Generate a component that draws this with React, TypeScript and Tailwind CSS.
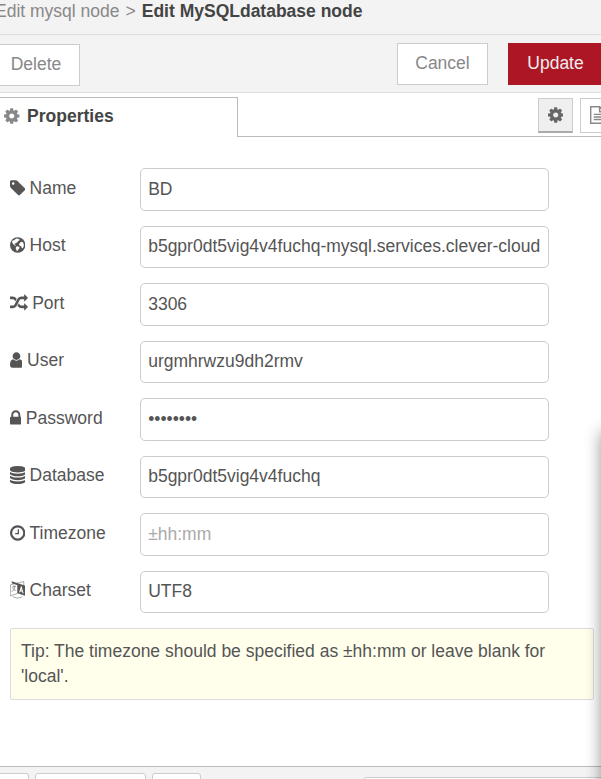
import React from "react";

type Glyph = { box: string; width: string; body: React.ReactNode };

const glyphs: Record<string, Glyph> = {
  tag: {
    box: "128 0 1536 1792",
    width: "w-[15.4px]",
    body: (
      <path d="M576 448q0-53-37.5-90.5t-90.5-37.5-90.5 37.5-37.5 90.5 37.5 90.5 90.5 37.5 90.5-37.5 37.5-90.5zm1067 576q0 53-37 90l-491 492q-39 37-91 37-53 0-90-37l-715-716q-38-37-64.5-101t-26.5-117v-416q0-52 38-90t90-38h416q53 0 117 26.5t102 64.5l715 714q37 39 37 91z" />
    ),
  },
  globe: {
    box: "128 0 1536 1792",
    width: "w-[15.4px]",
    body: (
      <>
        <circle cx="896" cy="896" r="768" />
        <path
          fill="#fff"
          d="M640 330L800 250L980 260L1000 330L1100 340L1090 430L980 470L900 560L820 640L730 690L640 760L560 740L590 850L700 900L690 970L560 910L440 800L350 640L330 520L450 420L560 420ZM1180 620L1330 560L1450 660L1510 860L1490 1060L1390 1230L1300 1200L1270 1060L1190 990L1090 960L1040 860L1080 720ZM740 1060L900 1020L1060 1100L1090 1200L1010 1290L930 1360L880 1490L800 1500L760 1350L690 1210Z"
        />
      </>
    ),
  },
  random: {
    box: "0 0 1792 1792",
    width: "w-[18px]",
    body: (
      <path d="M666 481q-60 92-137 273-22-45-37-72.5t-40.5-63.5-51-56.5-63-35-81.5-14.5h-224q-14 0-23-9t-9-23v-192q0-14 9-23t23-9h224q250 0 410 225zm1126 799q0 14-9 23l-320 320q-9 9-23 9-13 0-22.5-9.5t-9.5-22.5v-192q-32 0-85 .5t-81 1-73-1-71-5-64-10.5-63-18.5-58-28.5-59-40-55-53.5-56-69.5q59-93 136-273 22 45 37 72.5t40.5 63.5 51 56.5 63 35 81.5 14.5h256v-192q0-14 9-23t23-9q12 0 24 10l319 319q9 9 9 23zm0-896q0 14-9 23l-320 320q-9 9-23 9-13 0-22.5-9.5t-9.5-22.5v-192h-256q-48 0-87 15t-69 45-51 61.5-45 77.5q-32 62-78 171-29 66-49.5 111t-54 105-64 100-74 83-90 68.5-106.5 42-128 16.5h-224q-14 0-23-9t-9-23v-192q0-14 9-23t23-9h224q48 0 87-15t69-45 51-61.5 45-77.5q32-62 78-171 29-66 49.5-111t54-105 64-100 74-83 90-68.5 106.5-42 128-16.5h256v-192q0-14 9-23t23-9q12 0 24 10l319 319q9 9 9 23z" />
    ),
  },
  user: {
    box: "256 0 1280 1792",
    width: "w-[12.9px]",
    body: (
      <path d="M1536 1399q0 109-62.5 187t-150.5 78h-854q-88 0-150.5-78t-62.5-187q0-85 8.5-160.5t31.5-152 58.5-131 94-89 134.5-34.5q131 128 313 128t313-128q76 0 134.5 34.5t94 89 58.5 131 31.5 152 8.5 160.5zm-256-887q0 159-112.5 271.5t-271.5 112.5-271.5-112.5-112.5-271.5 112.5-271.5 271.5-112.5 271.5 112.5 112.5 271.5z" />
    ),
  },
  lock: {
    box: "320 0 1152 1792",
    width: "w-[11.6px]",
    body: (
      <path d="M640 768h512v-192q0-106-75-181t-181-75-181 75-75 181v192zm832 96v576q0 40-28 68t-68 28h-960q-40 0-68-28t-28-68v-576q0-40 28-68t68-28h32v-192q0-184 132-316t316-132 316 132 132 316v192h32q40 0 68 28t28 68z" />
    ),
  },
  database: {
    box: "128 0 1536 1792",
    width: "w-[15.4px]",
    body: (
      <path d="M896 768q237 0 443-43t325-127v170q0 69-103 128t-280 93.5-385 34.5-385-34.5-280-93.5-103-128v-170q119 84 325 127t443 43zm0 768q237 0 443-43t325-127v170q0 69-103 128t-280 93.5-385 34.5-385-34.5-280-93.5-103-128v-170q119 84 325 127t443 43zm0-384q237 0 443-43t325-127v170q0 69-103 128t-280 93.5-385 34.5-385-34.5-280-93.5-103-128v-170q119 84 325 127t443 43zm0-1152q208 0 385 34.5t280 93.5 103 128v128q0 69-103 128t-280 93.5-385 34.5-385-34.5-280-93.5-103-128v-128q0-69 103-128t280-93.5 385-34.5z" />
    ),
  },
  clock: {
    box: "128 0 1536 1792",
    width: "w-[15.4px]",
    body: (
      <path d="M1024 544v448q0 14-9 23t-23 9h-320q-14 0-23-9t-9-23v-64q0-14 9-23t23-9h224v-352q0-14 9-23t23-9h64q14 0 23 9t9 23zm416 352q0-148-73-273t-198-198-273-73-273 73-198 198-73 273 73 273 198 198 273 73 273-73 198-198 73-273zm224 0q0 209-103 385.5t-279.5 279.5-385.5 103-385.5-103-279.5-279.5-103-385.5 103-385.5 279.5-279.5 385.5-103 385.5 103 279.5 279.5 103 385.5z" />
    ),
  },
  language: {
    box: "128 0 1536 1792",
    width: "w-[15.4px]",
    body: (
      <>
        <path d="M300 30L880 230V420L300 220ZM880 230L1664 470V1480L880 1230Z" />
        <path
          fill="none"
          stroke="currentColor"
          strokeWidth="50"
          d="M160 390L880 180V1240L160 1480ZM900 220L1500 50V400M400 1560Q800 1830 1280 1620L1350 1540"
        />
        <path
          fill="none"
          stroke="currentColor"
          strokeWidth="60"
          d="M300 630L720 510M510 420V560M630 560Q560 900 300 1080M400 720Q540 900 720 960"
        />
        <path
          fill="none"
          stroke="#fff"
          strokeWidth="100"
          d="M1080 1130L1250 620L1440 1240M1130 960L1390 1030"
        />
      </>
    ),
  },
  cog: {
    box: "128 0 1536 1792",
    width: "w-[15.4px]",
    body: (
      <path d="M1152 896q0-106-75-181t-181-75-181 75-75 181 75 181 181 75 181-75 75-181zm512-109v222q0 12-8 23t-20 13l-185 28q-19 54-39 91 35 50 107 138 10 12 10 25t-9 23q-27 37-99 108t-94 71q-12 0-26-9l-138-108q-44 23-91 38-16 136-29 186-7 28-36 28h-222q-14 0-24.5-8.5t-11.5-21.5l-28-184q-49-16-90-37l-141 107q-10 9-25 9-14 0-25-11-126-114-165-168-7-10-7-23 0-12 8-23 15-21 51-66.5t54-70.5q-27-50-41-99l-183-27q-13-2-21-12.5t-8-23.5v-222q0-12 8-23t19-13l186-28q14-46 39-92-40-57-107-138-10-12-10-24 0-10 9-23 26-36 98.5-107.5t94.5-71.5q13 0 26 10l138 107q44-23 91-38 16-136 29-186 7-28 36-28h222q14 0 24.5 8.5t11.5 21.5l28 184q49 16 90 37l142-107q9-9 24-9 13 0 25 10 129 119 165 170 7 8 7 22 0 12-8 23-15 21-51 66.5t-54 70.5q26 50 41 98l183 28q13 2 21 12.5t8 23.5z" />
    ),
  },
  file: {
    box: "128 0 1536 1792",
    width: "w-[15.4px]",
    body: (
      <path
        fill="none"
        stroke="currentColor"
        strokeWidth="140"
        d="M198 70H1088L1594 576V1722H198ZM1088 70V576H1594M500 832H1312M500 1088H1312M500 1344H1312"
      />
    ),
  },
};

function Icon({ name }: { name: string }) {
  const g = glyphs[name];
  return (
    <svg viewBox={g.box} fill="currentColor" className={`h-[18px] shrink-0 ${g.width}`}>
      {g.body}
    </svg>
  );
}

const fields = [
  { icon: "tag", label: "Name", value: "BD" },
  { icon: "globe", label: "Host", value: "b5gpr0dt5vig4v4fuchq-mysql.services.clever-cloud" },
  { icon: "random", label: "Port", value: "3306" },
  { icon: "user", label: "User", value: "urgmhrwzu9dh2rmv" },
  { icon: "lock", label: "Password", value: "password", type: "password" },
  { icon: "database", label: "Database", value: "b5gpr0dt5vig4v4fuchq" },
  { icon: "clock", label: "Timezone", value: "", placeholder: "±hh:mm" },
  { icon: "language", label: "Charset", value: "UTF8" },
];

export default function App() {
  return (
    <div className="relative flex h-[779px] w-[601px] flex-col overflow-hidden bg-white font-['Liberation_Sans',Arial,sans-serif] text-[17.5px] leading-[25px] text-[#555]">
      <header className="flex h-[35px] shrink-0 items-start gap-[6px] border-b border-[#ddd] bg-[#f3f3f3] whitespace-nowrap text-[#888]">
        <span className="-mt-px -ml-[5px]">Edit mysql node</span>
        <span className="-mt-px">&gt;</span>
        <span className="-mt-px font-bold text-[#444]">Edit MySQLdatabase node</span>
      </header>

      <div className="flex h-[58px] shrink-0 items-start border-b border-[#ddd] bg-[#f3f3f3] text-[#888]">
        <button className="mt-[9px] -ml-px h-[42px] w-[81px] border border-[#ccc] bg-white pr-[7px] pb-[2px]">Delete</button>
        <button className="mt-2 ml-auto h-[42px] w-[91px] border border-[#ccc] bg-white pb-[2px]">Cancel</button>
        <button className="mt-2 -mr-[2px] ml-5 h-[42px] w-[95px] bg-[#ad1625] pb-[2px] text-[#eee]">Update</button>
      </div>

      <div className="flex h-11 shrink-0 pt-1">
        <div className="flex w-[238px] items-center gap-[7.5px] border-t border-r border-[#bbb] pb-[3px] pl-[4.2px] font-bold text-[#444]">
          <span className="flex text-[#888]">
            <Icon name="cog" />
          </span>
          Properties
        </div>
        <div className="flex flex-1 justify-end gap-[7px] overflow-hidden border-b border-[#bbb]">
          <button className="mt-px flex h-[35px] w-[35px] items-center justify-center border border-b-2 border-[#ccc] border-b-[#aaa] bg-[#efefef] text-[#666]">
            <Icon name="cog" />
          </button>
          <button className="mt-px -mr-[14px] flex h-[35px] w-[35px] items-center justify-center border border-[#ccc] bg-white pb-[2px] text-[#888]">
            <Icon name="file" />
          </button>
        </div>
      </div>

      <form className="flex flex-col pt-[31.3px]">
        {fields.map((f) => (
          <label key={f.label} className="flex h-[57.5px] items-start pl-[9.6px]">
            <span className="flex h-[39px] w-[130.4px] items-center gap-[4.6px]">
              <Icon name={f.icon} />
              <span className="pt-px">{f.label}</span>
            </span>
            <input
              type={f.type ?? "text"}
              defaultValue={f.value}
              placeholder={f.placeholder}
              className="h-[42.5px] w-[409px] rounded-[5px] border border-[#ccc] bg-white px-[7.2px] pb-[0.6px] placeholder:text-[#aaa]"
            />
          </label>
        ))}
      </form>

      <div className="mt-0 ml-[10px] h-[72px] w-[584px] shrink-0 rounded-[2px] border border-[#ddd] bg-[#ffffec] px-[10px] pt-[10px]">
        Tip: The timezone should be specified as ±hh:mm or leave blank for 'local'.
      </div>

      <footer className="mt-auto flex h-[13px] shrink-0 items-start overflow-hidden border-t border-[#bbb] bg-[#f3f3f3]">
        <div className="mt-[6px] h-10 w-[29px] shrink-0 rounded-tr-[3px] border border-l-0 border-[#ccc] bg-white" />
        <div className="mt-[6px] ml-[6px] h-10 w-[111px] shrink-0 rounded-[3px] border border-[#ccc] bg-white" />
        <div className="mt-[6px] ml-[6px] h-10 w-[49px] shrink-0 rounded-[3px] border border-[#ccc] bg-white" />
        <div className="mt-[10px] ml-[161px] h-10 w-[260px] shrink-0 rounded-[5px] border border-[#ccc] bg-white" />
      </footer>

      <div className="pointer-events-none absolute top-[430px] left-[602px] h-[500px] w-[200px] shadow-[0_2px_16px_rgba(0,0,0,0.45)]" />
    </div>
  );
}
